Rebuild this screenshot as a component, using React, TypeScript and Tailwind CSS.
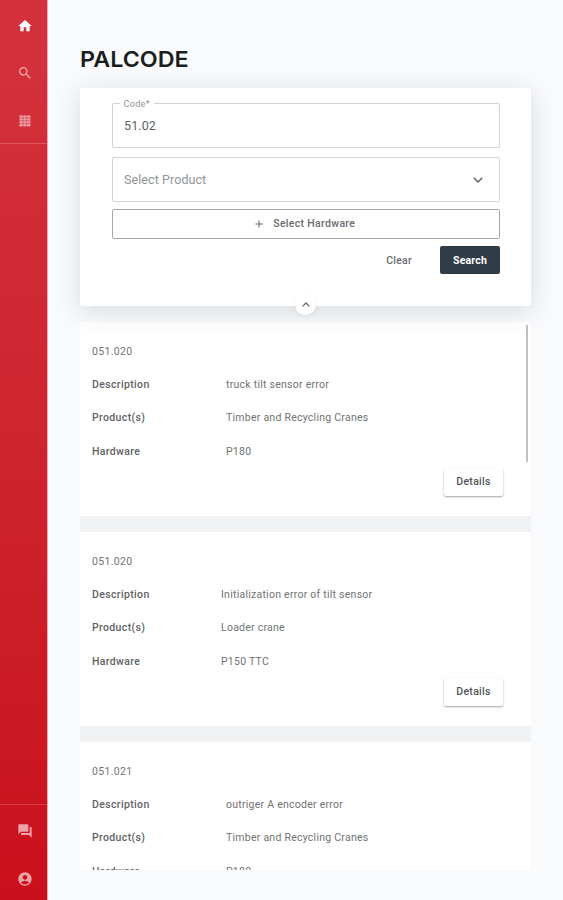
import type { ReactNode } from 'react';
import { clsx } from 'clsx';
import { MdAccountCircle, MdAdd, MdForum, MdHome, MdSearch } from 'react-icons/md';

interface ErrorCode {
  id: number;
  code: string;
  description: string;
  products: string;
  hardware: string;
  labelWidth: string;
}

const RESULTS: ErrorCode[] = [
  {
    id: 1,
    code: '051.020',
    description: 'truck tilt sensor error',
    products: 'Timber and Recycling Cranes',
    hardware: 'P180',
    labelWidth: 'w-[134px]',
  },
  {
    id: 2,
    code: '051.020',
    description: 'Initialization error of tilt sensor',
    products: 'Loader crane',
    hardware: 'P150 TTC',
    labelWidth: 'w-[129px]',
  },
  {
    id: 3,
    code: '051.021',
    description: 'outriger A encoder error',
    products: 'Timber and Recycling Cranes',
    hardware: 'P180',
    labelWidth: 'w-[134px]',
  },
];

function GridIcon() {
  return (
    <svg viewBox="0 0 12 12" className="mb-0.5 size-3" fill="currentColor">
      {[0.4, 3.3, 6.2, 9.1].map((y) =>
        [0.5, 4.3, 8.1].map((x) => <rect key={`${x}-${y}`} x={x} y={y} width="3.3" height="2.3" />)
      )}
    </svg>
  );
}

function NavItem({ label, active, children }: { label: string; active?: boolean; children: ReactNode }) {
  return (
    <button
      aria-label={label}
      className={clsx('flex h-12 w-full items-center justify-center pl-[3px]', active ? 'text-white' : 'text-[#f0a3a7]')}
    >
      {children}
    </button>
  );
}

function Sidebar() {
  return (
    <nav className="flex w-12 shrink-0 flex-col justify-between border-r border-[#f0a9ad] bg-linear-to-b from-[#d3323d] to-[#c90f1b]">
      <div className="h-36 border-b border-[#de5660] pt-0.5">
        <NavItem label="Home" active>
          <MdHome className="size-4" />
        </NavItem>
        <NavItem label="Search">
          <MdSearch className="mb-0.5 size-4" />
        </NavItem>
        <NavItem label="Codes">
          <GridIcon />
        </NavItem>
      </div>
      <div className="h-24 border-t border-[#d93a44] pt-0.5">
        <NavItem label="Messages">
          <MdForum className="size-4" />
        </NavItem>
        <NavItem label="Account">
          <MdAccountCircle className="size-4" />
        </NavItem>
      </div>
    </nav>
  );
}

function SearchPanel() {
  return (
    <section className="relative z-10 h-[218px] rounded-[3px] bg-white pt-[15px] pr-[31px] pl-[31.5px] shadow-[0_5px_24px_rgba(60,65,70,0.17)]">
      <div className="relative h-[45px] rounded-[2px] border border-[#d2d3d4] pl-[11.5px]">
        <label className="absolute -top-[6px] left-[7px] bg-white px-1 text-[9px] leading-[12px] tracking-[0.35px] text-[#909294]">
          Code*
        </label>
        <span className="text-[12.5px] leading-[44px] tracking-[0.1px] text-[#5c5f61]">51.02</span>
      </div>
      <div className="mt-[9px] flex h-[45px] items-center justify-between rounded-[2px] border border-[#d2d3d4] pr-4 pl-[11.5px]">
        <span className="pt-0.5 text-[12.5px] tracking-[0.08px] text-[#929496]">Select Product</span>
        <svg viewBox="0 0 10 6" className="h-1.5 w-2.5" fill="none" stroke="#5a5d5f" strokeWidth="1.4">
          <path d="M0.8 0.7 5 4.9 9.2 0.7" />
        </svg>
      </div>
      <button className="mt-[7px] flex h-[30px] w-full items-center justify-center gap-2 rounded-[2px] border border-[#a6a8a9] pr-[3px] text-[10.5px] font-medium tracking-[0.32px] text-[#6a6c6f]">
        <MdAdd className="size-3" />
        Select Hardware
      </button>
      <div className="mt-[7px] flex justify-end gap-7">
        <button className="pt-0.5 text-[10.5px] font-medium tracking-[0.25px] text-[#6a6c6f]">Clear</button>
        <button className="h-7 w-[60px] rounded-[2px] bg-[#303d46] pt-0.5 text-[10.5px] font-bold tracking-[0.2px] text-white">
          Search
        </button>
      </div>
      <button
        aria-label="Collapse"
        className="absolute bottom-[-9px] left-[215px] flex size-[21px] items-center justify-center rounded-full bg-white shadow-[0_2px_4px_rgba(60,70,80,0.08)]"
      >
        <svg viewBox="0 0 10 6" className="h-[5px] w-2" fill="none" stroke="#606365" strokeWidth="1.6">
          <path d="M0.8 5.3 5 1.1 9.2 5.3" />
        </svg>
      </button>
    </section>
  );
}

function ResultCard({ item }: { item: ErrorCode }) {
  const rows = [
    { label: 'Description', value: item.description },
    { label: 'Product(s)', value: item.products },
    { label: 'Hardware', value: item.hardware },
  ];

  return (
    <article className="h-[194px] shrink-0 bg-white px-3 pt-[13px] text-[10.5px] leading-[33.2px] tracking-[0.25px] text-[#707274]">
      <p className="tracking-[0.35px]">{item.code}</p>
      {rows.map((row) => (
        <div key={row.label} className="flex">
          <span className={clsx('shrink-0 font-medium tracking-[0.36px] text-[#606265]', item.labelWidth)}>
            {row.label}
          </span>
          <span>{row.value}</span>
        </div>
      ))}
      <div className="flex justify-end pr-4">
        <button className="h-7 w-[59px] rounded-[2px] bg-white text-[10.5px] leading-7 font-medium tracking-[0.3px] text-[#515356] shadow-[0_1px_2px_rgba(0,0,0,0.36)]">
          Details
        </button>
      </div>
    </article>
  );
}

export default function App() {
  return (
    <div className="flex h-[900px] w-full overflow-hidden bg-[#f8fafc] font-['Roboto','Liberation_Sans',sans-serif]">
      <Sidebar />
      <main className="flex w-[483px] flex-col pl-8">
        <h1 className="flex h-[88px] origin-left scale-x-[1.06] items-center pt-[30px] font-['Inter','Liberation_Sans',sans-serif] text-[22px] leading-none font-semibold text-[#1b1e21]">
          PALCODE
        </h1>
        <SearchPanel />
        <section className="relative mt-4 flex h-[548px] flex-col gap-4 overflow-hidden bg-[#f0f1f2]">
          {RESULTS.map((item) => (
            <ResultCard key={item.id} item={item} />
          ))}
          <div className="absolute top-[3px] right-[3px] h-[137px] w-0.5 bg-[#c0c1c2]" />
        </section>
      </main>
    </div>
  );
}
